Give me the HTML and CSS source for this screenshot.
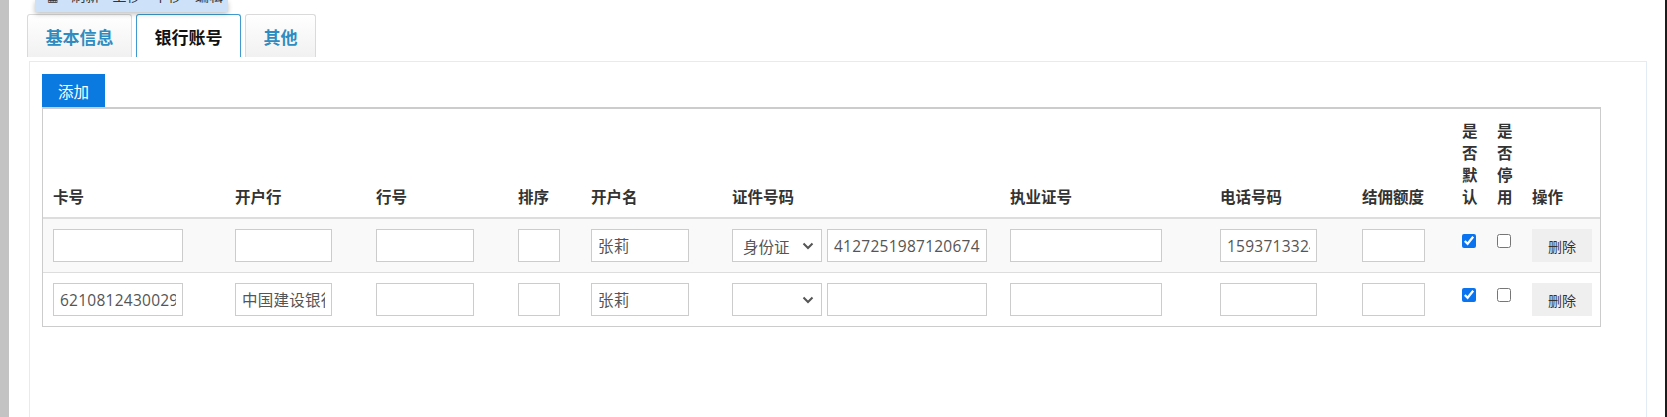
FILE: index.html
```html
<!DOCTYPE html>
<html lang="zh-CN">
<head>
<meta charset="utf-8">
<title>银行账号</title>
<link rel="stylesheet" href="styles.css">
</head>
<body>
<div class="page">
  <div class="strip"></div>
  <div class="main">
    <div class="menu-pop"><span class="menu-line"><span class="ico">▦</span> 刷新 上移 下移 编辑</span></div>
    <ul class="tabs">
      <li class="tab tab-wide">基本信息</li>
      <li class="tab tab-wide active">银行账号</li>
      <li class="tab tab-narrow">其他</li>
    </ul>
    <div class="panel">
      <button class="btn-add" type="button">添加</button>
      <table class="grid">
        <thead>
          <tr>
            <th class="c-card">卡号</th>
            <th class="c-bank">开户行</th>
            <th class="c-code">行号</th>
            <th class="c-sort">排序</th>
            <th class="c-name">开户名</th>
            <th class="c-id">证件号码</th>
            <th class="c-lic">执业证号</th>
            <th class="c-tel">电话号码</th>
            <th class="c-amt">结佣额度</th>
            <th class="c-chk">是否默认</th>
            <th class="c-chk">是否停用</th>
            <th class="c-op">操作</th>
          </tr>
        </thead>
        <tbody>
          <tr class="odd">
            <td><input class="f w-card" type="text" value=""></td>
            <td><input class="f w-bank" type="text" value=""></td>
            <td><input class="f w-code" type="text" value=""></td>
            <td><input class="f w-sort" type="text" value=""></td>
            <td><input class="f w-name" type="text" value="张莉"></td>
            <td>
              <div class="id-pair">
                <div class="sel-wrap">
                  <select class="sel"><option>身份证</option></select>
                  <svg class="chev" width="12" height="8" viewBox="0 0 12 8"><path d="M1.5 1.5 L6 6 L10.5 1.5" fill="none" stroke="#555" stroke-width="2"/></svg>
                </div>
                <input class="f w-idno" type="text" value="412725198712067428">
              </div>
            </td>
            <td><input class="f w-lic" type="text" value=""></td>
            <td><input class="f w-tel" type="text" value="15937133246"></td>
            <td><input class="f w-amt" type="text" value=""></td>
            <td><input class="chk" type="checkbox" checked></td>
            <td><input class="chk" type="checkbox"></td>
            <td><button class="btn-del" type="button">删除</button></td>
          </tr>
          <tr>
            <td><input class="f w-card" type="text" value="6210812430029876543"></td>
            <td><input class="f w-bank" type="text" value="中国建设银行"></td>
            <td><input class="f w-code" type="text" value=""></td>
            <td><input class="f w-sort" type="text" value=""></td>
            <td><input class="f w-name" type="text" value="张莉"></td>
            <td>
              <div class="id-pair">
                <div class="sel-wrap">
                  <select class="sel"><option></option></select>
                  <svg class="chev" width="12" height="8" viewBox="0 0 12 8"><path d="M1.5 1.5 L6 6 L10.5 1.5" fill="none" stroke="#555" stroke-width="2"/></svg>
                </div>
                <input class="f w-idno" type="text" value="">
              </div>
            </td>
            <td><input class="f w-lic" type="text" value=""></td>
            <td><input class="f w-tel" type="text" value=""></td>
            <td><input class="f w-amt" type="text" value=""></td>
            <td><input class="chk" type="checkbox" checked></td>
            <td><input class="chk" type="checkbox"></td>
            <td><button class="btn-del" type="button">删除</button></td>
          </tr>
        </tbody>
      </table>
    </div>
  </div>
  <div class="edge"></div>
</div>
</body>
</html>
```

FILE: styles.css
```css
html, body {
  margin: 0;
  padding: 0;
  background: #fff;
  overflow: hidden;
}

body {
  font-family: "Noto Sans CJK SC", "Open Sans", sans-serif;
  color: #333;
}

.page {
  display: flex;
  height: 417px;
}

.strip {
  flex: none;
  width: 9px;
  background: #c3c3c3;
}

.edge {
  flex: none;
  width: 2px;
  background: #1c1c1c;
}

.main {
  flex: 1;
  min-width: 0;
  position: relative;
  padding: 14px 0 0 18px;
}

/* dropdown menu hanging over the top edge */
.menu-pop {
  position: absolute;
  left: 26px;
  top: 0;
  width: 193px;
  height: 12px;
  overflow: hidden;
  background: #cde2f9;
  box-shadow: 0 2px 5px rgba(0, 0, 0, 0.25);
  z-index: 5;
}

.menu-line {
  position: absolute;
  left: 12px;
  top: -14px;
  font-size: 14px;
  line-height: 18px;
  color: #333;
  white-space: nowrap;
  word-spacing: 10px;
}

.ico {
  font-family: "DejaVu Sans", sans-serif;
  font-size: 12px;
}

/* tabs */
.tabs {
  display: flex;
  gap: 4px;
  margin: 0;
  padding: 0;
  list-style: none;
}

.tab {
  box-sizing: border-box;
  height: 43px;
  padding-top: 2px;
  border: 1px solid #dadada;
  border-bottom: none;
  border-radius: 3px 3px 0 0;
  background: linear-gradient(#ffffff, #f1f1f1);
  font-size: 17px;
  font-weight: 700;
  line-height: 40px;
  text-align: center;
  color: #2f8cc0;
}

.tab-wide { width: 105px; }
.tab-narrow { width: 71px; }

.tab.active {
  background: #fff;
  border-color: #3f9bcf;
  color: #111;
}

/* panel */
.panel {
  box-sizing: border-box;
  width: 1618px;
  height: 360px;
  margin: 4px 0 0 2px;
  padding: 12px;
  border: 1px solid #e3ecf4;
  border-bottom: none;
}

.btn-add {
  display: block;
  width: 63px;
  height: 33px;
  padding: 0;
  border: none;
  background: #0a7ae0;
  color: #fff;
  font-family: "Noto Sans CJK SC", sans-serif;
  font-size: 15.5px;
}

/* table */
.grid {
  width: 1559px;
  table-layout: fixed;
  border-collapse: separate;
  border-spacing: 0;
  border: 1px solid #cccccc;
  border-top: 2px solid #cccccc;
}

.grid th {
  padding: 10px;
  vertical-align: bottom;
  text-align: left;
  font-size: 15.5px;
  font-weight: 700;
  line-height: 22px;
  color: #333;
  border-bottom: 2px solid #dddddd;
}

.grid td {
  padding: 10px;
  vertical-align: top;
}

.grid tbody tr + tr td {
  border-top: 1px solid #dddddd;
}

.grid tr.odd td {
  background: #f9f9f9;
}

.c-card { width: 162px; }
.c-bank { width: 121px; }
.c-code { width: 122px; }
.c-sort { width: 53px; }
.c-name { width: 121px; }
.c-id   { width: 258px; }
.c-lic  { width: 190px; }
.c-tel  { width: 122px; }
.c-amt  { width: 80px; }
.c-chk  { width: 15px; }
.c-op   { width: 58px; }

/* form fields */
.f {
  display: block;
  box-sizing: border-box;
  height: 33px;
  margin: 0;
  padding: 0 6px;
  border: 1px solid #cccccc;
  border-radius: 0;
  background: #fff;
  font-family: "Open Sans", "Noto Sans CJK SC", sans-serif;
  font-size: 15.5px;
  letter-spacing: 0.25px;
  color: #555;
  outline: none;
}

.w-card { width: 130px; }
.w-bank { width: 97px; }
.w-code { width: 98px; }
.w-sort { width: 42px; }
.w-name { width: 98px; }
.w-idno { width: 160px; }
.w-lic  { width: 152px; }
.w-tel  { width: 97px; }
.w-amt  { width: 63px; }

.id-pair {
  display: flex;
  gap: 5px;
}

.sel-wrap {
  position: relative;
  width: 90px;
  height: 33px;
}

.sel {
  display: block;
  box-sizing: border-box;
  width: 90px;
  height: 33px;
  margin: 0;
  padding: 0 0 0 10px;
  border: 1px solid #cccccc;
  border-radius: 0;
  background: #fff;
  -webkit-appearance: none;
  appearance: none;
  font-family: "Noto Sans CJK SC", sans-serif;
  font-size: 15.5px;
  color: #555;
}

.chev {
  position: absolute;
  right: 8px;
  top: 13px;
  pointer-events: none;
}

.chk {
  display: block;
  width: 14px;
  height: 14px;
  margin: 5px 0 0 0;
  accent-color: #0a74f0;
}

.btn-del {
  display: block;
  width: 60px;
  height: 33px;
  padding: 0;
  border: none;
  background: #efefef;
  color: #333;
  font-family: "Noto Sans CJK SC", sans-serif;
  font-size: 14px;
}
```
